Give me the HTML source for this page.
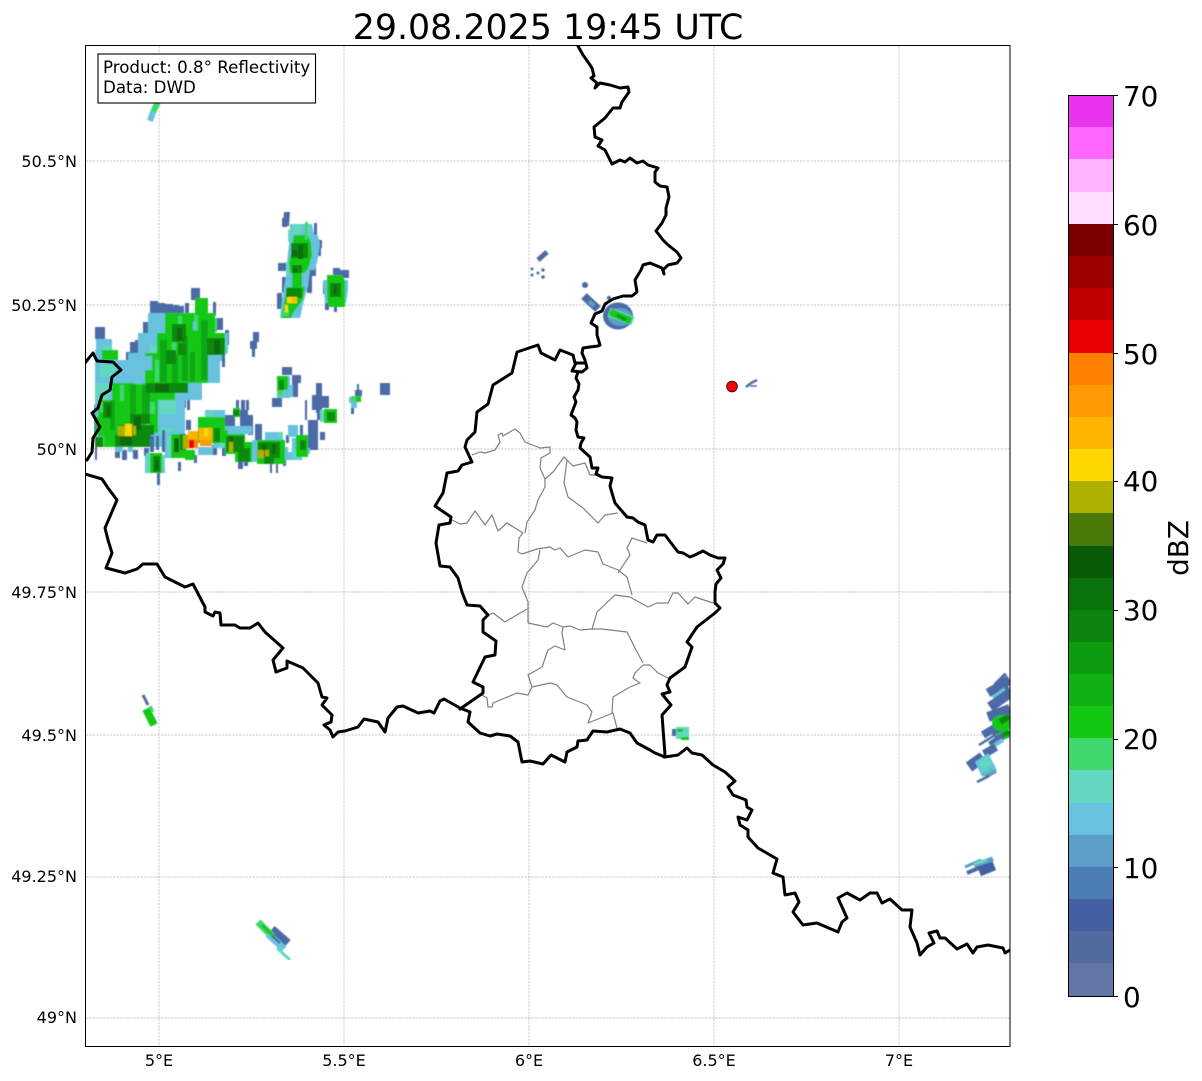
<!DOCTYPE html>
<html><head><meta charset="utf-8"><title>Radar</title>
<style>
html,body{margin:0;padding:0;background:#fff}
svg{display:block}
text{font-family:"DejaVu Sans",sans-serif;fill:#000}
.l{font-size:16px;text-anchor:end}
.b{font-size:16px;text-anchor:middle}
.gr{stroke:#b8b8b8;stroke-width:.7;stroke-dasharray:2.4 1;fill:none}
.bd{fill:none;stroke:#000;stroke-width:3;stroke-linejoin:round;stroke-linecap:round}
.cn{fill:none;stroke:#808080;stroke-width:1.2;stroke-linejoin:round}
.s{fill:none}
</style></head><body>
<svg width="1202" height="1081" viewBox="0 0 1202 1081" xmlns="http://www.w3.org/2000/svg">
<defs><clipPath id="ax"><rect x="86" y="46" width="924" height="1000"/></clipPath>
<filter id="bl" x="0" y="0" width="1" height="1"><feGaussianBlur stdDeviation=".4"/></filter></defs>
<rect width="1202" height="1081" fill="#fff"/>
<text x="548" y="39" text-anchor="middle" style="font-size:34.8px">29.08.2025 19:45 UTC</text>

<g clip-path="url(#ax)">
<path class="gr" d="M159 46V1046M344 46V1046M529 46V1046M714 46V1046M899 46V1046M86 161H1010M86 305H1010M86 449H1010M86 592H1010M86 735H1010M86 877H1010M86 1018H1010"/>
<g filter="url(#bl)">
<!-- NW body: blue fringe -->
<path fill="#4c6aa6" d="M95 327h10v12h-10zM106 340h2v10h-2zM143 322h6v12h-6zM135 340h3v10h-3zM130 342h10v11h-10zM150 301h8v13h-8zM158 303h7v13h-7zM165 304h8v14h-8zM173 305h6v14h-6zM179 306h5v12h-5zM185 303h4v12h-4zM191 288h9v12h-9zM199 300h8v6h-8zM213 302h3v14h-3zM215 318h8v12h-8zM225 330h4v15h-4zM222 355h3v12h-3zM94 405h4v30h-4zM95 445h2v15h-2zM115 450h5v8h-5zM122 450h5v10h-5zM133 450h5v9h-5zM144 448h5v8h-5zM187 345h5v12h-5zM185 365h5v10h-5zM178 396h8v12h-8zM170 405h3v40h-3zM176 408h3v30h-3zM181 408h3v30h-3zM187 400h3v10h-3zM126 352h6v12h-6zM154 348h4v10h-4z"/>
<!-- NW body: light blue -->
<path fill="#68c2de" d="M96 339h16v11h-16zM148 313h67v20h-67zM138 333h90v20h-90zM128 353h87v10h-87zM95 350h7v10h-7zM95 360h125v23h-125zM95 383h107v17h-107zM95 400h90v33h-90zM95 433h90v14h-90zM115 447h8v5h-8zM128 447h5v5h-5zM215 353h7v8h-7z"/>
<path fill="#62d8c0" d="M102 345h10v8h-10zM100 365h16v12h-16zM95 383h14v20h-14zM160 400h16v14h-16zM208 316h6v8h-6zM218 340h9v14h-9zM150 345h7v12h-7zM160 428h12v8h-12z"/>
<!-- NW body: green -->
<path fill="#12c812" d="M195 298h13v15h-13zM165 313h50v20h-50zM157 333h68v20h-68zM145 353h63v30h-63zM102 350h16v10h-16zM112 383h63v17h-63zM98 400h60v17h-60zM95 417h63v16h-63zM98 433h44v14h-44z"/>
<path fill="#3fd86c" d="M178 316h4v17h-4zM194 315h4v16h-4zM215 318h2v14h-2zM155 360h4v22h-4zM120 385h4v16h-4zM100 402h6v10h-6zM146 418h4v14h-4zM98 436h6v10h-6zM172 340h4v12h-4zM150 402h5v12h-5z"/>
<path fill="#0fa812" d="M160 340h7v42h-7zM182 336h6v45h-6zM201 320h7v60h-7zM130 385h6v45h-6zM110 400h5v30h-5zM142 385h8v30h-8zM172 355h6v28h-6zM190 352h5v30h-5z"/>
<path fill="#68c2de" d="M145 356h7v14h-7zM135 372h8v12h-8zM193 322h3v8h-3z"/>
<path fill="#0c8a0f" d="M146 383h42v10h-42zM172 324h14v18h-14zM178 343h8v12h-8zM207 338h18v17h-18zM103 402h9v16h-9zM130 414h20v10h-20zM118 425h36v10h-36zM115 435h36v12h-36zM95 437h8v10h-8zM166 350h10v14h-10z"/>
<path fill="#0a6a0c" d="M155 384h14v8h-14zM177 328h5v12h-5zM214 340h6v14h-6zM134 416h7v14h-7zM120 437h12v8h-12zM107 406h3v10h-3z"/>
<path fill="#aeb000" d="M118 426h7v10h-7zM133 426h3v9h-3z"/>
<path fill="#ffd700" d="M125 424h7v12h-7z"/>

<!-- lower band -->
<path fill="#4c6aa6" d="M157 473h3v12h-3zM150 436h4v16h-4zM156 436h3v14h-3zM162 430h3v22h-3zM178 462h3v9h-3zM168 440h3v12h-3zM186 420h5v10h-5zM208 410h3v8h-3zM236 400h3v10h-3zM241 400h4v10h-4zM246 400h3v10h-3zM225 415h10v18h-10zM240 410h8v24h-8zM248 415h5v20h-5zM255 424h7v18h-7zM238 462h5v7h-5zM244 460h4v6h-4zM270 464h2v9h-2zM276 464h2v9h-2zM266 448h2v8h-2zM308 420h10v30h-10zM305 400h2v20h-2zM316 383h6v30h-6zM312 395h10v15h-10zM322 396h7v12h-7zM317 410h6v10h-6zM320 432h5v8h-5zM286 435h3v8h-3zM300 425h3v10h-3zM212 445h5v10h-5zM222 444h4v12h-4zM194 455h3v8h-3zM283 456h3v10h-3z"/>
<path fill="#68c2de" d="M145 455h20v18h-20zM165 432h20v26h-20zM198 447h15v8h-15zM205 410h20v10h-20zM225 426h27v8h-27zM265 432h18v8h-18zM282 447h6v13h-6zM292 438h10v22h-10zM288 425h10v12h-10zM300 448h10v6h-10zM252 440h6v22h-6zM213 440h12v8h-12zM286 452h8v8h-8z"/>
<path fill="#62d8c0" d="M146 453h6v20h-6zM160 456h5v14h-5zM167 436h6v20h-6zM205 412h8v6h-8zM293 450h6v10h-6zM278 432h5v6h-5zM218 442h6v6h-6z"/>
<path fill="#12c812" d="M150 453h12v20h-12zM171 434h14v24h-14zM185 450h10v10h-10zM198 417h27v26h-27zM225 434h20v20h-20zM235 442h17v20h-17zM257 440h28v24h-28zM296 435h12v22h-12zM210 430h18v12h-18zM233 408h7v9h-7z"/>
<path fill="#0c8a0f" d="M153 456h7v16h-7zM180 434h6v16h-6zM226 436h18v16h-18zM238 448h12v14h-12zM258 442h22v16h-22zM264 456h10v8h-10zM214 428h6v14h-6zM300 440h6v10h-6zM233 410h6v6h-6z"/>
<path fill="#0a6a0c" d="M155 460h4v10h-4zM229 436h4v14h-4zM262 444h4v12h-4zM272 444h4v10h-4zM174 438h5v14h-5z"/>
<path fill="#aeb000" d="M183 435h5v14h-5zM229 442h4v10h-4zM258 450h6v8h-6zM265 450h4v6h-4z"/>
<path fill="#ff9900" d="M188 431h10v17h-10zM200 428h12v18h-12z"/>
<path fill="#ffb400" d="M188 431h9v8h-9zM199 428h13v12h-13z"/>
<path fill="#ff7f00" d="M192 440h6v8h-6z"/>
<path fill="#e60000" d="M189 440h5v8h-5z"/>
<path fill="#ffd700" d="M204 428h4v8h-4z"/>

<!-- N cell -->
<path fill="#4c6aa6" d="M284 212h6l-1 14h-6zM282 218h5v9h-5zM315 240h7v8h-7zM318 248h3v8h-3zM307 270h5v23h-5zM312 262h4v14h-4zM278 263h8v8h-8zM282 277h5v16h-5zM277 293h5v16h-5zM302 226h2v8h-2zM314 223h3v14h-3z"/>
<path fill="#68c2de" d="M290 224h22l2 10 4 2 2 8-2 14-3 12-5 0-2 16-5 18-3 14h-20l2-18 4-24 2-24 2-14z"/>
<path fill="#62d8c0" d="M292 224h10v10h-10zM306 224h4v18h-4zM286 262h3v14h-3zM288 230h3v12h-3z"/>
<path fill="#12c812" d="M294 235h14l3 8 1 12-4 14-4 4h-14l-1-10 3-14zM288 287h17l-2 12-4 6-6 8-2 5h-9l2-14 2-10zM292 273h10v14h-10z"/>
<path fill="#3fd86c" d="M305 222h3v18h-3zM281 310h8v6h-8z"/>
<path fill="#0c8a0f" d="M291 243h17v15h-17zM292 265h10v8h-10zM286 288h16v10h-16z"/>
<path fill="#0a6a0c" d="M298 245h5v14h-5zM292 250h5v6h-5zM293 268h4v5h-4z"/>
<path fill="#ffd700" d="M287 297h10v6h-10zM285 305h3v7h-3z"/>
<path fill="#ffb400" d="M292 298h5v4h-5z"/>
<!-- E of N cell -->
<path fill="#4c6aa6" d="M333 268h7v10h-7zM340 270h6v8h-6zM345 270h4v8h-4zM323 282h4v12h-4zM325 303h4v7h-4zM334 306h3v6h-3z"/>
<path fill="#68c2de" d="M323 280h25v10l-2 13h-21z"/>
<path fill="#12c812" d="M327 275h15l3 6v26h-16l-2-8z"/>
<path fill="#0c8a0f" d="M330 283h11v14h-11z"/>
<path fill="#0a6a0c" d="M334 285h3v10h-3z"/>
<!-- small W cells -->
<path fill="#4c6aa6" d="M253 332h6v10h-6zM250 341h7v8h-7zM252 349h3v8h-3zM282 367h10v8h-10zM292 375h6v22h-6zM298 375h3v8h-3zM272 398h10v9h-10zM380 383h10v12h-10zM357 384h2v6h-2zM355 390h7v6h-7zM351 406h3v8h-3z"/>
<path fill="#68c2de" d="M277 376h13v22h-13zM285 385h8v12h-8zM349 397h8v6h-8zM351 403h6v5h-6z"/>
<path fill="#12c812" d="M277 376h11v14h-11zM355 396h6v6h-6z"/>
<path fill="#0c8a0f" d="M279 380h5v10h-5z"/>
<path fill="#3fd86c" d="M351 396h5v6h-5zM277 390h6v6h-6z"/>
<path fill="#62d8c0" d="M320 410h5v12h-5z"/>
<path fill="#12c812" d="M324 409h13v14h-13z"/>
<path fill="#0c8a0f" d="M327 412h8v9h-8z"/>

<!-- top streak -->
<path class="s" d="M150 121l3-9" stroke="#68c2de" stroke-width="6"/><path class="s" d="M153 112l5-10" stroke="#3fd86c" stroke-width="6"/>

<!-- bottom-left slivers -->
<path class="s" d="M143 695l5 10" stroke="#536a9e" stroke-width="3"/>
<path class="s" d="M146 709l8 16" stroke="#12c812" stroke-width="8"/>
<path class="s" d="M150 706l3 6" stroke="#3fd86c" stroke-width="3"/>
<path class="s" d="M272 929l16 14" stroke="#4c6aa6" stroke-width="8"/>
<path class="s" d="M258 922l14 14" stroke="#3fd86c" stroke-width="7"/>
<path class="s" d="M268 934l16 15" stroke="#68c2de" stroke-width="7"/>
<path class="s" d="M277 948l13 12" stroke="#62d8c0" stroke-width="3"/>
<path class="s" d="M262 925l12 12" stroke="#12c812" stroke-width="3"/>
<path class="s" d="M272 936l8 7" stroke="#4560a2" stroke-width="2"/>

<!-- mid small -->
<path fill="#4c6aa6" d="M672 729h9v7h-9z"/><path fill="#62d8c0" d="M676 727h13v12h-13z"/><path fill="#12c812" d="M677 729h6v3h-6zM681 737h8v3h-8z"/>

<!-- top centre -->
<path class="s" d="M538 260l9-8" stroke="#536a9e" stroke-width="5"/>
<g fill="#536a9e"><circle cx="532" cy="269" r="1.5"/><circle cx="532" cy="275" r="1.5"/><circle cx="538" cy="273" r="1.5"/><circle cx="543" cy="270" r="1.7"/><circle cx="543" cy="277" r="1.8"/></g>
<circle cx="585" cy="285" r="3" fill="#4c6aa6"/>
<path class="s" d="M584 296l14 13" stroke="#4c6aa6" stroke-width="8"/>
<path class="s" d="M589 301l5 5" stroke="#5b9fc6" stroke-width="4"/>
<circle cx="609" cy="298" r="2.2" fill="#4c6aa6"/>
<ellipse cx="618" cy="316" rx="15" ry="13.5" fill="#4c6aa6"/>
<ellipse cx="620" cy="317" rx="12" ry="9" fill="#5b9fc6"/>
<path class="s" d="M609 312l24 9" stroke="#62d8c0" stroke-width="9"/>
<path class="s" d="M610 312l21 9" stroke="#12c812" stroke-width="7"/>
<path class="s" d="M617 315l9 5" stroke="#0c8a0f" stroke-width="2"/>

<!-- near dot -->
<path class="s" d="M746 387l5-4 6-3" stroke="#536a9e" stroke-width="2.5"/>
<path class="s" d="M750 386h7" stroke="#4c6aa6" stroke-width="1.5"/>

<!-- east edge -->
<path class="s" d="M995 685l11-11" stroke="#4c6aa6" stroke-width="4"/>
<path class="s" d="M988 693l22-13" stroke="#4c6aa6" stroke-width="9"/>
<path class="s" d="M999 697l11-8" stroke="#4c6aa6" stroke-width="10"/>
<path class="s" d="M993 698l12-9" stroke="#68c2de" stroke-width="4"/>
<path class="s" d="M990 707l20-14" stroke="#4c6aa6" stroke-width="10"/>
<path class="s" d="M988 717l22-8" stroke="#4c6aa6" stroke-width="10"/>
<path class="s" d="M983 735l20-12" stroke="#4c6aa6" stroke-width="8"/>
<path class="s" d="M979 745l16-10" stroke="#4c6aa6" stroke-width="2.5"/>
<path class="s" d="M993 735l17-12" stroke="#4c6aa6" stroke-width="9"/>
<ellipse cx="1002" cy="723" rx="10" ry="8" fill="#12c812"/>
<path class="s" d="M997 738l13-5" stroke="#12c812" stroke-width="8"/>
<path class="s" d="M1000 722l10-6" stroke="#0c8a0f" stroke-width="6"/>
<path class="s" d="M999 737l11-5" stroke="#0c8a0f" stroke-width="4"/>
<path class="s" d="M990 745l13-9" stroke="#4c6aa6" stroke-width="7"/>
<path class="s" d="M990 748l13-8" stroke="#68c2de" stroke-width="4"/>
<path class="s" d="M984 754l12-7" stroke="#4c6aa6" stroke-width="8"/>
<path class="s" d="M969 767l14-10" stroke="#4c6aa6" stroke-width="11"/>
<path d="M975 762L988 753 997 770 982 777z" fill="#68c2de"/>
<path class="s" d="M981 766l9-6" stroke="#62d8c0" stroke-width="9"/>
<path class="s" d="M982 775l11-7" stroke="#3fd86c" stroke-width="1.5"/>
<path class="s" d="M985 777l11-6" stroke="#5b9fc6" stroke-width="4"/>
<path class="s" d="M977 782l12-6" stroke="#4c6aa6" stroke-width="2.5"/>
<path class="s" d="M965 867l16-7" stroke="#5b9fc6" stroke-width="3"/>
<path class="s" d="M967 873l14-6" stroke="#4c6aa6" stroke-width="4"/>
<path class="s" d="M979 871l15-6" stroke="#4560a2" stroke-width="11"/>
<path class="s" d="M974 865l19-6" stroke="#5b9fc6" stroke-width="5"/>
<path class="s" d="M974 864l13-4" stroke="#62d8c0" stroke-width="3"/>
</g>

<!-- cantons -->
<path class="cn" d="M472 455L480 452 485 453 495 450 500 442 498 435 502 433 503 436 515 429 520 433 525 442 540 448 550 447 550 453 541 458 540 468 545 479 545 487 538 500 535 510 527 522 525 533"/>
<path class="cn" d="M545 479L553 472 564 457 567 460 573 466 585 463 590 475 597 475"/>
<path class="cn" d="M567 460L564 483 568 497 583 508 598 523 605 515 618 513"/>
<path class="cn" d="M452 520L460 524 467 523 475 511 485 525 492 515 498 531 507 523 523 533 519 538 518 552 522 554 537 549 550 547 555 550 560 548 568 557 585 550 598 552 603 564 618 570 627 577 632 595"/>
<path class="cn" d="M647 543L632 538 627 548 630 555 618 573"/>
<path class="cn" d="M540 550L538 560 527 573 522 587 528 602 528 623"/>
<path class="cn" d="M488 615L493 613 505 622 527 609"/>
<path class="cn" d="M528 623L547 627 553 623 563 627 570 626 580 630 592 629 602 629 627 632 635 648 643 663"/>
<path class="cn" d="M592 629L597 612 615 595 630 597 648 607 657 603 668 603 673 593 678 593 688 604 695 597 713 603"/>
<path class="cn" d="M563 627L562 633 565 650 555 646 548 650 542 667 528 675 532 687 528 695 517 693 493 703 492 707 488 707 487 698 482 695"/>
<path class="cn" d="M532 687L550 683 557 685 567 697 587 705 592 712 588 723 613 713 617 728"/>
<path class="cn" d="M643 665L635 673 633 678 640 683 630 687 613 697 612 713"/>
<path class="cn" d="M643 665L650 665 658 673 668 678"/>

<!-- borders -->
<path class="bd" d="M578 46L583 55 588 62 592 68 594 76 591 78 597 83 595 88 600 83 610 85 620 88 628 87 629 92 622 102 620 108 613 108 605 118 594 127 595 137 602 140 598 146 605 150 612 164 620 160 625 162 630 158 637 163 643 161 648 165 658 168 655 172 655 182 660 186 667 187 669 197 666 208 666 215 662 223 656 231 663 240 668 245 677 252 681 258 677 263 668 265 663 270 664 274 662 268 650 263 643 265 641 270 635 280 637 292 632 296 623 296 613 299 605 304 602 311 595 314 591 323 597 327 597 335 600 345 598 346 590 347 583 348 582 353 585 360 587 368 582 372 572 371 576 363 585 363"/>
<path class="bd" d="M578 372L576 378 579 384 578 390 574 397 576 402 574 407 571 415 575 418 577 422 576 430 578 437 584 438 581 443 580 448 590 457 592 468 598 468 596 474 602 477 612 478 610 486 612 493 615 503 627 517 633 518 638 522 645 525 648 540 653 542 657 535 665 535 678 552 683 553 690 557 695 555 703 551 710 555 718 558 725 558 723 564 717 570 721 578 716 584 715 592 715 603 720 608 715 613 697 627 687 642 692 647 685 667 670 678 667 685 670 692 662 694 671 705 662 715 665 755 664 757"/>
<path class="bd" d="M575 363L573 355 560 350 555 360 541 353 538 345 517 352 512 373 493 385 488 404 477 412 475 432 467 440 465 447 472 462 462 465 458 471 447 473 443 493 435 506 451 517 450 523 439 525 436 543 440 566 450 567 458 578 462 592 467 605 480 606 488 615 483 620 483 632 496 641 495 655 485 657 473 682 483 687 483 693 460 709"/>
<path class="bd" d="M85 474L102 479 108 488 117 500 105 528 108 540 112 553 106 568 110 569 125 573 137 569 143 564 157 564 165 577 185 587 193 584 205 607 205 612 213 616 215 612 220 613 221 625 235 625 240 628 250 628 258 623 265 632 283 648 273 660 276 672 287 668 287 661 303 668 318 683 322 697 327 698 322 705 332 715 331 722 324 725 330 730 333 737 338 732 345 731 358 727 364 719 378 722 385 732 388 718 397 707 403 706 418 713 430 711 434 713 440 701 444 699 460 708 470 712 468 722 480 733 490 736 497 734 510 736 518 742 522 762 530 761 543 764 551 755 565 762 567 752 577 747 578 741 587 740 593 731 607 732 620 729 630 733 637 743 650 750 655 753 665 757 678 755 687 748 692 753 702 755 713 765 725 772 735 781 728 787 733 795 746 800 747 807 752 810 747 820 738 817 740 825 748 830 748 837 758 848 777 859 773 873 783 877 785 895 795 893 799 902 793 912 803 925 817 923 838 932 842 922 847 918 838 898 847 893 860 900 870 893 877 893 882 903 890 899 902 910 912 910 910 927 917 943 920 955 927 947 934 943 929 933 937 931 940 938 945 938 957 949 967 944 973 953 977 947 988 945 1003 948 1005 953 1010 950"/>
<path class="bd" d="M85 363L93 353 97 361 113 362 121 370 112 377 110 390 102 395 98 408 92 413 100 427 93 438 92 452 87 460"/>
<circle cx="732" cy="386.5" r="5.4" fill="#f00" stroke="#000" stroke-width=".7"/>
</g>

<rect x="85.5" y="45.5" width="924.5" height="1001" fill="none" stroke="#000" stroke-width="1"/>
<rect x="98" y="54" width="217.5" height="49" fill="#fff" stroke="#000" stroke-width="1.1"/>
<text x="103" y="73" style="font-size:16.67px">Product: 0.8° Reflectivity</text>
<text x="103" y="93" style="font-size:16.67px">Data: DWD</text>

<text class="l" x="77" y="167">50.5°N</text>
<text class="l" x="77" y="311">50.25°N</text>
<text class="l" x="77" y="455">50°N</text>
<text class="l" x="77" y="598">49.75°N</text>
<text class="l" x="77" y="741">49.5°N</text>
<text class="l" x="77" y="882">49.25°N</text>
<text class="l" x="77" y="1023">49°N</text>
<text class="b" x="159" y="1066">5°E</text>
<text class="b" x="344" y="1066">5.5°E</text>
<text class="b" x="529" y="1066">6°E</text>
<text class="b" x="714" y="1066">6.5°E</text>
<text class="b" x="899" y="1066">7°E</text>

<!-- colorbar -->
<g shape-rendering="crispEdges">
<rect x="1068" y="95" width="46" height="33" fill="#ea33ee"/>
<rect x="1068" y="127" width="46" height="33" fill="#ff66ff"/>
<rect x="1068" y="159" width="46" height="34" fill="#ffb3ff"/>
<rect x="1068" y="192" width="46" height="33" fill="#ffddff"/>
<rect x="1068" y="224" width="46" height="33" fill="#7a0000"/>
<rect x="1068" y="256" width="46" height="33" fill="#9e0000"/>
<rect x="1068" y="288" width="46" height="33" fill="#be0000"/>
<rect x="1068" y="320" width="46" height="34" fill="#e60000"/>
<rect x="1068" y="353" width="46" height="33" fill="#ff7f00"/>
<rect x="1068" y="385" width="46" height="33" fill="#ff9900"/>
<rect x="1068" y="417" width="46" height="33" fill="#ffb400"/>
<rect x="1068" y="449" width="46" height="33" fill="#ffd700"/>
<rect x="1068" y="481" width="46" height="33" fill="#aeb000"/>
<rect x="1068" y="513" width="46" height="34" fill="#4a7a0a"/>
<rect x="1068" y="546" width="46" height="33" fill="#0a5a0a"/>
<rect x="1068" y="578" width="46" height="33" fill="#0a720d"/>
<rect x="1068" y="610" width="46" height="33" fill="#0c840f"/>
<rect x="1068" y="642" width="46" height="33" fill="#0d9b10"/>
<rect x="1068" y="674" width="46" height="33" fill="#0fb012"/>
<rect x="1068" y="706" width="46" height="33" fill="#12c812"/>
<rect x="1068" y="738" width="46" height="33" fill="#3fd86c"/>
<rect x="1068" y="770" width="46" height="34" fill="#62d8c0"/>
<rect x="1068" y="803" width="46" height="33" fill="#68c2de"/>
<rect x="1068" y="835" width="46" height="33" fill="#5b9fc6"/>
<rect x="1068" y="867" width="46" height="33" fill="#4c7db4"/>
<rect x="1068" y="899" width="46" height="33" fill="#4560a2"/>
<rect x="1068" y="931" width="46" height="33" fill="#536a9e"/>
<rect x="1068" y="963" width="46" height="33" fill="#6476a6"/>
<rect x="1068.5" y="95.5" width="45" height="901" fill="none" stroke="#000" stroke-width="1"/>
<path d="M1113 95.5h5M1113 224.5h5M1113 353.5h5M1113 481.5h5M1113 610.5h5M1113 739.5h5M1113 867.5h5M1113 996.5h5" stroke="#000" stroke-width="1"/>
</g>
<text x="1123" y="106" style="font-size:27.8px">70</text>
<text x="1123" y="235" style="font-size:27.8px">60</text>
<text x="1123" y="364" style="font-size:27.8px">50</text>
<text x="1123" y="491" style="font-size:27.8px">40</text>
<text x="1123" y="620" style="font-size:27.8px">30</text>
<text x="1123" y="749" style="font-size:27.8px">20</text>
<text x="1123" y="878" style="font-size:27.8px">10</text>
<text x="1123" y="1007" style="font-size:27.8px">0</text>
<text transform="translate(1188,548) rotate(-90)" text-anchor="middle" style="font-size:27.8px">dBZ</text>
</svg>
</body></html>
